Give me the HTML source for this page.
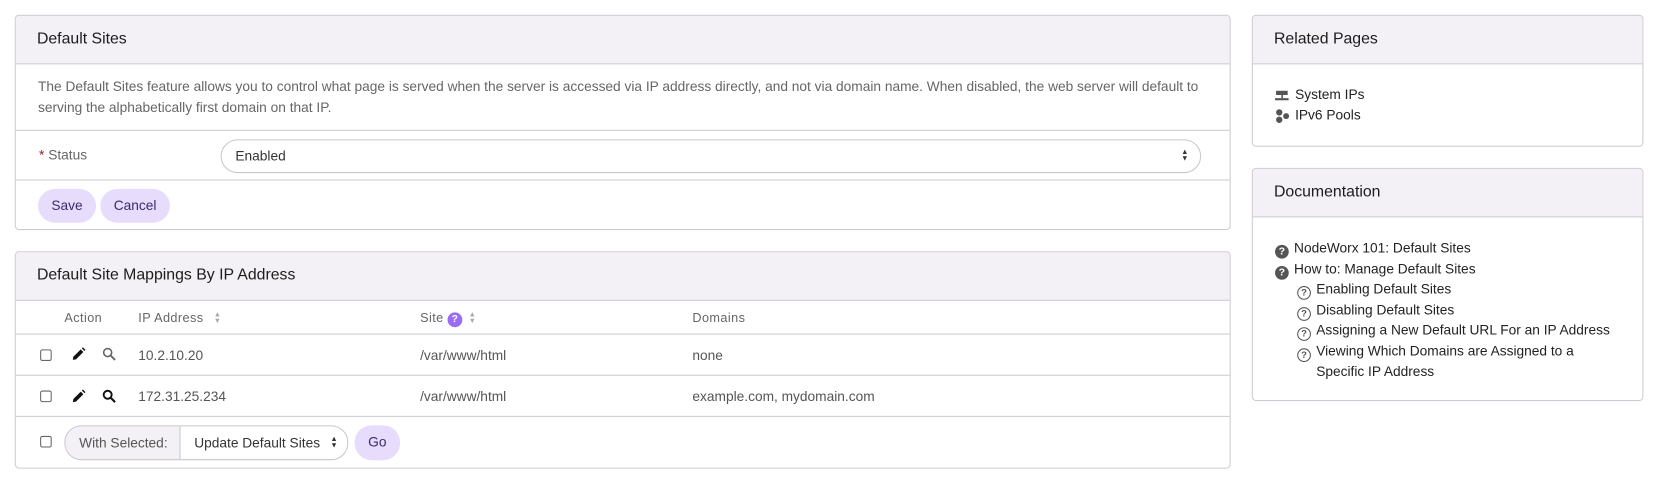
<!DOCTYPE html>
<html><head><meta charset="utf-8"><style>
*{box-sizing:border-box;margin:0;padding:0}
html,body{width:1655px;height:482px;overflow:hidden;background:#fff}
#w{width:1568px;height:457px;position:relative;transform:scale(1.05549);transform-origin:0 0;font-family:"Liberation Sans",sans-serif;font-size:13px;color:#333}
.p{position:absolute;border:1px solid #cfcbd3;border-radius:4px;background:#fff;overflow:hidden}
.h{height:46px;background:#f3f0f6;border-bottom:1px solid #cfcbd3;font-size:15px;color:#1c1c1c;padding:0 20px;line-height:44px}
.a{position:absolute;white-space:nowrap}
.hr{position:absolute;left:0;right:0;height:1px;background:#cfcbd3}
.btn{position:absolute;height:32px;border-radius:16px;background:#e8dcfc;color:#3b2a6a;line-height:32px;text-align:center;font-size:13px}
.cb{position:absolute;width:11px;height:11px;border:1px solid #666;border-radius:2px;background:#fff}
.th{color:#666;font-size:12px;letter-spacing:.4px}
.q{display:inline-block;width:13px;height:13px;border-radius:50%;background:#555;color:#fff;font-size:10px;font-weight:bold;text-align:center;line-height:13px;vertical-align:-2px;margin-right:5px}
.q2{display:inline-block;width:13px;height:13px;border-radius:50%;border:1.5px solid #555;color:#555;font-size:9px;font-weight:bold;text-align:center;line-height:10px;vertical-align:-2px;margin-right:5px}
.sort{color:#aaa;font-size:7px;line-height:6px;display:inline-block;vertical-align:-1px;margin-left:6px}
.ar{font-size:7px;line-height:6px;color:#333}
</style></head><body><div id="w">

<div class="p" style="left:14px;top:14px;width:1152px;height:204px">
<div class="h">Default Sites</div>
<div class="a" style="left:21px;top:57px;color:#666;line-height:20px;white-space:normal;width:1110px">The Default Sites feature allows you to control what page is served when the server is accessed via IP address directly, and not via domain name. When disabled, the web server will default to serving the alphabetically first domain on that IP.</div>
<div class="hr" style="top:108px"></div>
<div class="a" style="left:22px;top:124px;color:#666"><span style="color:#a02020">*</span> Status</div>
<div class="a" style="left:194px;top:117px;width:929px;height:32px;border:1px solid #c9c6cc;border-radius:16px;padding-left:13px;line-height:30px;color:#333">Enabled</div>
<div class="a ar" style="left:1104px;top:127px">▲<br>▼</div>
<div class="hr" style="top:155px"></div>
<div class="btn" style="left:21px;top:164px;width:55px">Save</div>
<div class="btn" style="left:80px;top:164px;width:66px">Cancel</div>
</div>

<div class="p" style="left:14px;top:238px;width:1152px;height:206px">
<div class="h">Default Site Mappings By IP Address</div>
<div class="a th" style="left:46px;top:55px">Action</div>
<div class="a th" style="left:116px;top:55px">IP Address <span class="sort">▲<br>▼</span></div>
<div class="a th" style="left:383px;top:55px">Site <span style="display:inline-block;width:14px;height:14px;border-radius:50%;background:#9b6bf2;color:#fff;font-size:10px;text-align:center;line-height:14px;font-weight:bold">?</span><span class="sort">▲<br>▼</span></div>
<div class="a th" style="left:641px;top:55px">Domains</div>
<div class="hr" style="top:77px"></div>
<div class="cb" style="left:23px;top:92px"></div>
<svg class="a" style="left:53px;top:90px" width="13" height="13" viewBox="0 0 13 13"><path d="M1 12 L1.5 9 L8.5 2 L11 4.5 L4 11.5 Z" fill="#111"/><path d="M9.5 1 L10.5 0 L13 2.5 L12 3.5 Z" fill="#111"/></svg>
<svg class="a" style="left:82px;top:90px" width="13" height="13" viewBox="0 0 13 13"><circle cx="5" cy="5" r="3.8" fill="none" stroke="#666" stroke-width="1.5"/><path d="M8 8 L12 12" stroke="#666" stroke-width="1.8"/></svg>
<div class="a" style="left:116px;top:90px;color:#555">10.2.10.20</div>
<div class="a" style="left:383px;top:90px;color:#555">/var/www/html</div>
<div class="a" style="left:641px;top:90px;color:#555">none</div>
<div class="hr" style="top:116px"></div>
<div class="cb" style="left:23px;top:131px"></div>
<svg class="a" style="left:53px;top:130px" width="13" height="13" viewBox="0 0 13 13"><path d="M1 12 L1.5 9 L8.5 2 L11 4.5 L4 11.5 Z" fill="#111"/><path d="M9.5 1 L10.5 0 L13 2.5 L12 3.5 Z" fill="#111"/></svg>
<svg class="a" style="left:82px;top:130px" width="13" height="13" viewBox="0 0 13 13"><circle cx="5" cy="5" r="3.8" fill="none" stroke="#111" stroke-width="1.8"/><path d="M8 8 L12 12" stroke="#111" stroke-width="2"/></svg>
<div class="a" style="left:116px;top:129px;color:#555">172.31.25.234</div>
<div class="a" style="left:383px;top:129px;color:#555">/var/www/html</div>
<div class="a" style="left:641px;top:129px;color:#555">example.com, mydomain.com</div>
<div class="hr" style="top:155px"></div>
<div class="cb" style="left:23px;top:174px"></div>
<div class="a" style="left:46px;top:164px;width:269px;height:33px;border:1px solid #c9c6cc;border-radius:16px;overflow:hidden">
<div class="a" style="left:0;top:0;width:109px;height:31px;background:#f3f0f6;border-right:1px solid #c9c6cc;line-height:31px;padding-left:13px;color:#555">With Selected:</div>
<div class="a" style="left:122px;top:0;line-height:31px;color:#333">Update Default Sites</div>
<div class="a ar" style="left:251px;top:10px">▲<br>▼</div>
</div>
<div class="btn" style="left:321px;top:164px;width:43px;height:33px">Go</div>
</div>

<div class="p" style="left:1186px;top:14px;width:371px;height:125px">
<div class="h">Related Pages</div>
<svg class="a" style="left:21px;top:70px" width="13" height="12" viewBox="0 0 13 12"><rect x="1" y="1" width="11" height="4" fill="#555"/><rect x="6" y="5" width="1.5" height="3" fill="#555"/><rect x="0" y="8" width="13" height="2" fill="#555"/></svg>
<div class="a" style="left:40px;top:67px;color:#222">System IPs</div>
<svg class="a" style="left:21px;top:88px" width="14" height="14" viewBox="0 0 14 14"><circle cx="4" cy="3.5" r="3" fill="#555"/><circle cx="4" cy="10.5" r="3" fill="#555"/><circle cx="10.5" cy="7" r="2.8" fill="#555"/></svg>
<div class="a" style="left:40px;top:86px;color:#222">IPv6 Pools</div>
</div>

<div class="p" style="left:1186px;top:159px;width:371px;height:221px">
<div class="h">Documentation</div>
<div class="a" style="left:21px;top:67px;color:#222"><span class="q">?</span>NodeWorx 101: Default Sites</div>
<div class="a" style="left:21px;top:87px;color:#222"><span class="q">?</span>How to: Manage Default Sites</div>
<div class="a" style="left:42px;top:106px;color:#222"><span class="q2">?</span>Enabling Default Sites</div>
<div class="a" style="left:42px;top:126px;color:#222"><span class="q2">?</span>Disabling Default Sites</div>
<div class="a" style="left:42px;top:145px;color:#222"><span class="q2">?</span>Assigning a New Default URL For an IP Address</div>
<div class="a" style="left:42px;top:165px;color:#222"><span class="q2">?</span>Viewing Which Domains are Assigned to a</div>
<div class="a" style="left:60px;top:184px;color:#222">Specific IP Address</div>
</div>
</div></body></html>
